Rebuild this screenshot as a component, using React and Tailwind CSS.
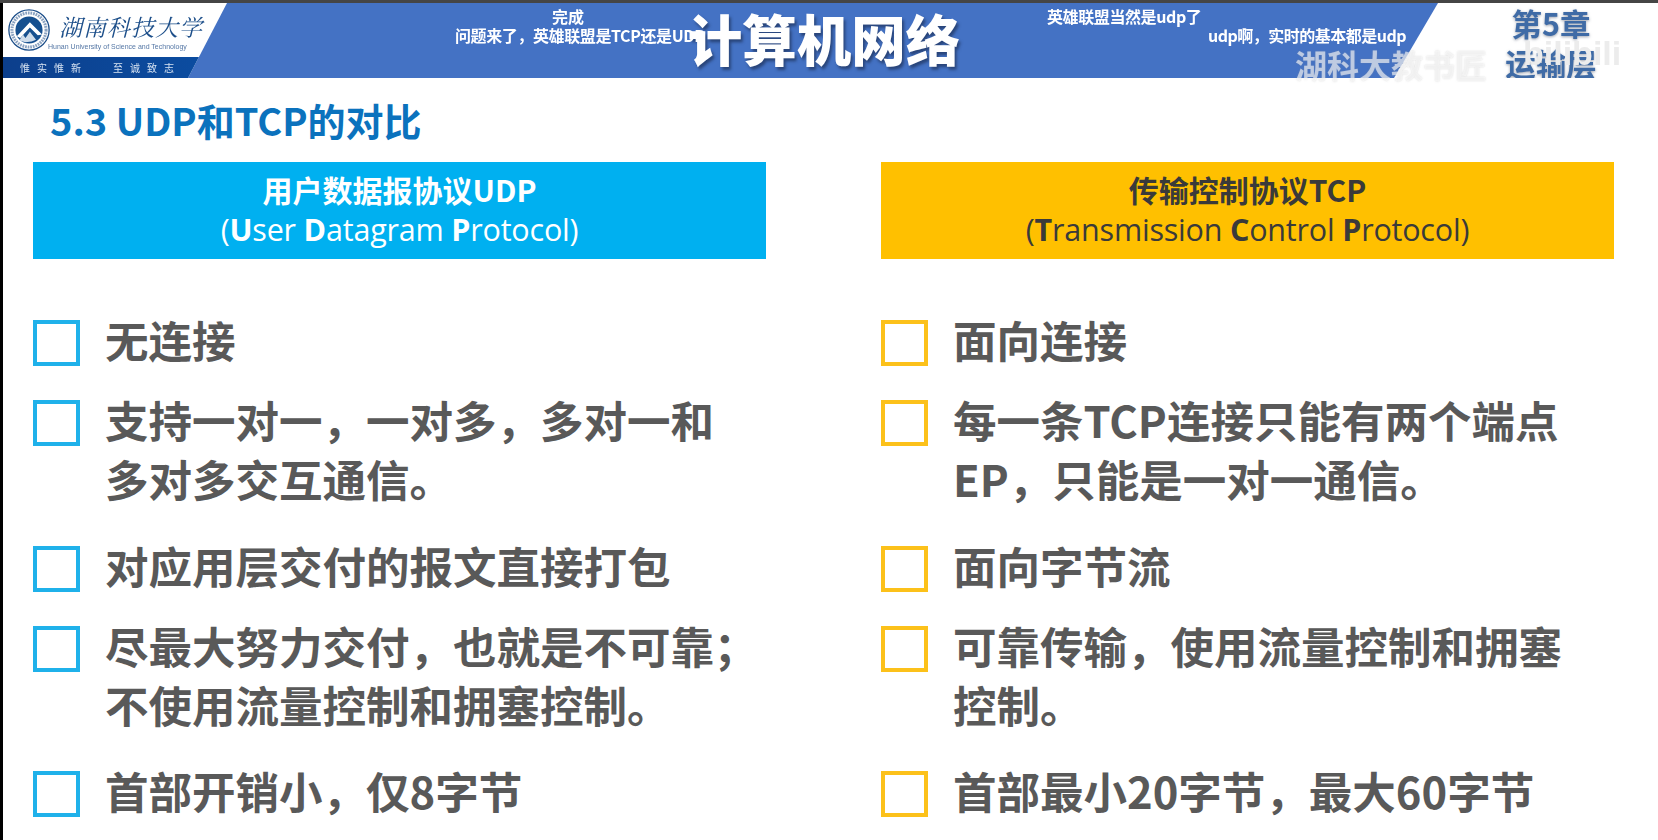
// App.jsx
const udpItems = [
  { lines: ['无连接'], className: 'h-[80px]' },
  { lines: ['支持一对一，一对多，多对一和', '多对多交互通信。'], className: 'h-[146px]' },
  { lines: ['对应用层交付的报文直接打包'], className: 'h-[80px]' },
  { lines: ['尽最大努力交付，也就是不可靠；', '不使用流量控制和拥塞控制。'], className: 'h-[145px]' },
  { lines: ['首部开销小，仅8字节'], className: 'h-[76px]' },
]

const tcpItems = [
  { lines: ['面向连接'], className: 'h-[80px]' },
  { lines: ['每一条TCP连接只能有两个端点', 'EP，只能是一对一通信。'], className: 'h-[146px]' },
  { lines: ['面向字节流'], className: 'h-[80px]' },
  { lines: ['可靠传输，使用流量控制和拥塞', '控制。'], className: 'h-[145px]' },
  { lines: ['首部最小20字节，最大60字节'], className: 'h-[76px]' },
]

function Emblem() {
  return (
    <svg viewBox="0 0 48 48" className="w-[42px] h-[42px] shrink-0">
      <circle cx="24" cy="24" r="23" fill="#ffffff" stroke="#1d4f8a" strokeWidth="1.5" />
      <circle cx="24" cy="24" r="19.5" fill="none" stroke="#8aa2c0" strokeWidth="3.5" strokeDasharray="2 1" />
      <circle cx="24" cy="24" r="15.5" fill="#16508f" />
      <path d="M10 31 L25 15 L39 29 L34 30 L25 21 L14 33 Z" fill="#ffffff" />
      <path d="M13 36 L17 29 L20 33 L25 26 L32 35 L27 37 L20 38 Z" fill="#cfdcea" />
    </svg>
  )
}

function Column({ accent, boxColor, title, subtitle, items }) {
  return (
    <div className="flex flex-col w-[733px]">
      <div className={`h-[97px] flex flex-col items-center justify-center pb-[4px] ${accent}`}>
        <p className="text-[30px] leading-[40px] font-bold">{title}</p>
        <p className="text-[30.5px] leading-[40px] font-medium -tracking-[0.2px] font-['Open_Sans','Noto_Sans_CJK_SC',sans-serif]">{subtitle}</p>
      </div>
      <div className="mt-[44px] flex flex-col">
        {items.map((item) => (
          <div key={item.lines[0]} className={`flex items-start gap-[25px] ${item.className}`}>
            <div className={`w-[47px] h-[46px] shrink-0 mt-[17px] border-[4px] ${boxColor}`} />
            <div className="text-[43.5px] leading-[59px] font-bold text-[#595959] whitespace-nowrap pt-[7px]">
              {item.lines.map((line) => (
                <p key={line}>{line}</p>
              ))}
            </div>
          </div>
        ))}
      </div>
    </div>
  )
}

export default function App() {
  return (
    <div className="w-[1658px] h-[840px] overflow-hidden bg-black pl-[3px] pt-[3px] font-['Noto_Sans_CJK_SC','Noto_Sans',sans-serif] relative">
      <div className="absolute top-0 left-0 right-0 h-[3px] bg-[#454545]" />
      <div className="bg-white h-full flex flex-col blur-[0.4px]">
        {/* Slide banner */}
        <div className="relative h-[75px] bg-[#4472c4] flex items-stretch justify-between">
          <div className="w-[224px] bg-white [clip-path:polygon(0_0,100%_0,185px_100%,0_100%)]">
            <div className="h-[54px] flex items-center pl-[5px] gap-[9px]">
              <Emblem />
              <div className="flex flex-col pt-[1px]">
                <span className="text-[23px] leading-[31px] italic text-[#1d4f8a] tracking-[1px] whitespace-nowrap font-['Noto_Serif_CJK_SC','Noto_Sans_CJK_SC',serif]">湖南科技大学</span>
                <span className="text-[7px] leading-[9px] text-[#5577a5] -ml-[11px] font-['Liberation_Sans',sans-serif] whitespace-nowrap">Hunan University of Science and Technology</span>
              </div>
            </div>
            <div className="h-[21px] bg-gradient-to-r from-[#0c3f8c] to-[#0b4ea3] text-[#d7e3f2] text-[10px] leading-[21px] pl-[17px] flex gap-[25px] whitespace-nowrap">
              <span className="tracking-[7px]">惟实惟新</span>
              <span className="tracking-[7px]">至诚致志</span>
            </div>
          </div>
          <div className="flex-1 flex justify-center items-center pb-[4px]">
            <span className="text-[54.5px] leading-none font-black text-white ml-[27px] [text-shadow:2px_3px_3px_rgba(30,50,90,0.7)]">计算机网络</span>
          </div>
          <div className="w-[264px] bg-white [clip-path:polygon(44px_0,100%_0,100%_100%,0_100%)] flex flex-col items-center pl-[50px]">
            <span className="text-[30.5px] leading-[40px] font-bold text-[#3f6ba6] [text-shadow:0_1px_3px_rgba(90,100,120,0.6)]">第5章</span>
            <span className="text-[30.5px] leading-[40px] font-bold text-[#3f6ba6] [text-shadow:0_1px_3px_rgba(90,100,120,0.6)]">运输层</span>
          </div>

          {/* Overlaid comments */}
          <span className="absolute left-[549px] top-[3px] text-[16px] leading-[20px] font-bold text-white">完成</span>
          <span className="absolute left-[452px] top-[22px] text-[16px] leading-[20px] font-bold text-white whitespace-nowrap -tracking-[0.4px]">问题来了，英雄联盟是TCP还是UDP</span>
          <span className="absolute left-[1044px] top-[3px] text-[16px] leading-[20px] font-bold text-white whitespace-nowrap -tracking-[0.4px]">英雄联盟当然是udp了</span>
          <span className="absolute left-[1205px] top-[22px] text-[16px] leading-[20px] font-bold text-white whitespace-nowrap -tracking-[0.5px]">udp啊，实时的基本都是udp</span>
          <span className="absolute left-[1292px] top-[43px] text-[32px] leading-[36px] font-bold text-white/60 whitespace-nowrap [text-shadow:0_0_2px_rgba(150,150,150,0.35)]">湖科大教书匠</span>
          <span className="absolute left-[1520px] top-[30px] text-[34px] leading-[40px] font-bold text-[#ececec] whitespace-nowrap font-['Liberation_Sans',sans-serif]">bilibili</span>
        </div>

        <h1 className="mt-[19px] ml-[47px] text-[38px] leading-[46px] font-bold text-[#0b72bd]">5.3 UDP和TCP的对比</h1>

        <div className="mt-[19px] ml-[30px] flex gap-[115px]">
          <Column
            accent="bg-[#00b0f0] text-white"
            boxColor="border-[#1fb1ea]"
            title="用户数据报协议UDP"
            subtitle={<>(<b>U</b>ser <b>D</b>atagram <b>P</b>rotocol)</>}
            items={udpItems}
          />
          <Column
            accent="bg-[#ffc000] text-[#3a3a3a]"
            boxColor="border-[#fcc11a]"
            title="传输控制协议TCP"
            subtitle={<>(<b>T</b>ransmission <b>C</b>ontrol <b>P</b>rotocol)</>}
            items={tcpItems}
          />
        </div>
      </div>
    </div>
  )
}
